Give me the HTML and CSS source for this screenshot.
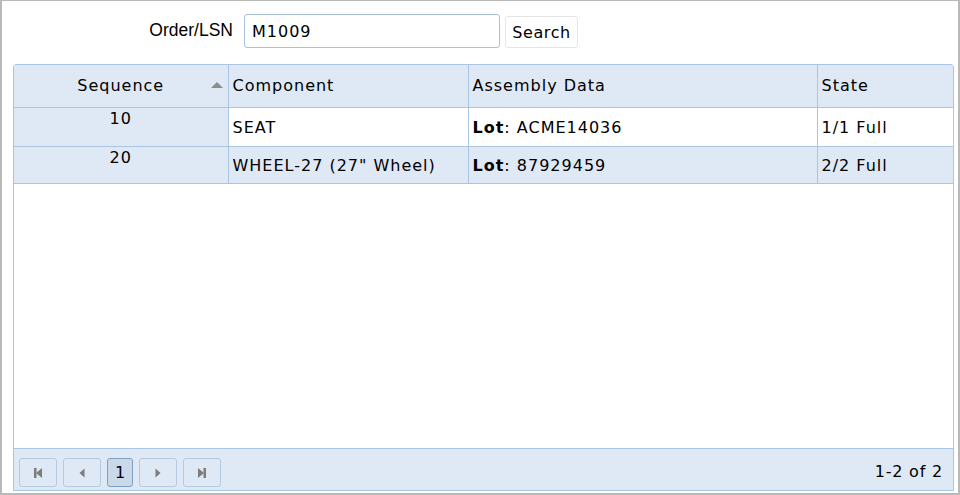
FILE: index.html
```html
<!DOCTYPE html>
<html>
<head>
<meta charset="utf-8">
<link rel="stylesheet" href="styles.css">
</head>
<body>
<div class="frame">
  <form class="search">
    <label class="search-label">Order/LSN</label>
    <input class="search-input" type="text" value="M1009">
    <button class="search-btn" type="button">Search</button>
  </form>
  <div class="grid">
    <table class="tbl">
      <colgroup>
        <col class="c1"><col class="c2"><col class="c3"><col class="c4">
      </colgroup>
      <thead>
        <tr>
          <th class="seq-h"><span>Sequence</span><span class="sort"></span></th>
          <th>Component</th>
          <th>Assembly Data</th>
          <th>State</th>
        </tr>
      </thead>
      <tbody>
        <tr class="r1">
          <td class="seq">10</td>
          <td>SEAT</td>
          <td><b>Lot</b>: ACME14036</td>
          <td>1/1 Full</td>
        </tr>
        <tr class="r2">
          <td class="seq">20</td>
          <td>WHEEL-27 (27" Wheel)</td>
          <td><b>Lot</b>: 87929459</td>
          <td>2/2 Full</td>
        </tr>
      </tbody>
    </table>
    <div class="spacer"></div>
    <div class="pager">
      <div class="pbtns">
        <button class="pb" type="button"><svg width="12" height="12" viewBox="0 0 12 12"><rect x="2" y="1" width="2.5" height="10" fill="#7d7d7d"/><path d="M10 1 L4 6 L10 11 Z" fill="#7d7d7d"/></svg></button>
        <button class="pb" type="button"><svg width="12" height="12" viewBox="0 0 12 12"><path d="M8.5 1.5 L3.5 6 L8.5 10.5 Z" fill="#7d7d7d"/></svg></button>
        <button class="pb pn active" type="button">1</button>
        <button class="pb" type="button"><svg width="12" height="12" viewBox="0 0 12 12"><path d="M3.5 1.5 L8.5 6 L3.5 10.5 Z" fill="#7d7d7d"/></svg></button>
        <button class="pb" type="button"><svg width="12" height="12" viewBox="0 0 12 12"><path d="M2 1 L8 6 L2 11 Z" fill="#7d7d7d"/><rect x="7.5" y="1" width="2.5" height="10" fill="#7d7d7d"/></svg></button>
      </div>
      <div class="pinfo">1-2 of 2</div>
    </div>
  </div>
</div>
</body>
</html>
```
FILE: styles.css
```css
* { box-sizing: border-box; }
html, body { margin: 0; padding: 0; background: #fff; }
.frame {
  width: 960px;
  height: 495px;
  border: 2px solid #b9b9b9;
  border-top-width: 1px;
  display: flex;
  flex-direction: column;
  padding: 13px 4px 2px 11px;
  font-family: "DejaVu Sans", Verdana, sans-serif;
  color: #000;
}
.search {
  display: flex;
  align-items: center;
  height: 34px;
  margin: 0;
}
.search-label {
  width: 220px;
  text-align: right;
  font-family: "Liberation Sans", Arial, sans-serif;
  font-size: 17.5px;
  margin-top: -2px;
}
.search-input {
  margin-left: 11px;
  width: 256px;
  height: 34px;
  border: 1px solid #a7c1db;
  border-radius: 3px;
  padding: 0 7px;
  font-family: "DejaVu Sans", Verdana, sans-serif;
  font-size: 16px;
  letter-spacing: 1px;
  color: #000;
  outline: none;
}
.search-btn {
  margin-left: 5px;
  margin-top: 2px;
  width: 73px;
  height: 32px;
  border: 1px solid #e4e4e4;
  border-radius: 3px;
  background: #fff;
  font-family: "DejaVu Sans", Verdana, sans-serif;
  font-size: 16px;
  letter-spacing: 0.6px;
  color: #000;
  padding: 0;
}
.grid {
  margin-top: 16px;
  flex: 1;
  border: 1px solid #a9c5e1;
  border-radius: 3px 3px 0 0;
  display: flex;
  flex-direction: column;
  font-size: 16px;
  letter-spacing: 1px;
}
.tbl {
  border-collapse: collapse;
  table-layout: fixed;
  width: 100%;
}
.c1 { width: 214px; }
.c2 { width: 240px; }
.c3 { width: 349px; }
.c4 { width: auto; }
.tbl th {
  background: #dfe8f5;
  font-weight: normal;
  text-align: left;
  height: 42px;
  padding: 0 4px;
  border-left: 1px solid #a9c5e1;
  border-bottom: 1px solid #a9c5e1;
}
.tbl th:first-child { border-left: none; }
.seq-h {
  text-align: center !important;
  position: relative;
}
.sort {
  position: absolute;
  right: 5px;
  top: 17px;
  width: 0;
  height: 0;
  border-left: 6px solid transparent;
  border-right: 6px solid transparent;
  border-bottom: 6px solid #8c8c8c;
}
.tbl td {
  padding: 0 4px;
  border-left: 1px solid #a9c5e1;
  border-bottom: 1px solid #a9c5e1;
  vertical-align: middle;
  padding-top: 2px;
}
.tbl td:first-child { border-left: none; }
.r1 td { height: 39px; background: #fff; }
.r2 td { height: 37px; background: #dfe8f5; }
.tbl td.seq {
  background: #dfe8f5;
  text-align: center;
  vertical-align: top;
  padding-top: 1px;
}
.spacer { flex: 1; background: #fff; }
.pager {
  height: 42px;
  background: #dfe8f5;
  border-top: 1px solid #a9c5e1;
  display: flex;
  align-items: center;
  justify-content: space-between;
  padding: 0 10px 0 5px;
}
.pbtns { display: flex; gap: 6px; padding-top: 6px; }
.pb {
  width: 38px;
  height: 29px;
  border: 1px solid #b5cadf;
  border-radius: 3px;
  background: #dfe8f5;
  display: flex;
  align-items: center;
  justify-content: center;
  padding: 0;
}
.pn {
  width: 26px;
  font-family: "DejaVu Sans", Verdana, sans-serif;
  font-size: 16px;
  color: #000;
}
.active {
  background: #c9d9ea;
  border-color: #7f9fc2;
}
.pinfo { font-size: 16px; padding-top: 4px; letter-spacing: 0.8px; }
```
